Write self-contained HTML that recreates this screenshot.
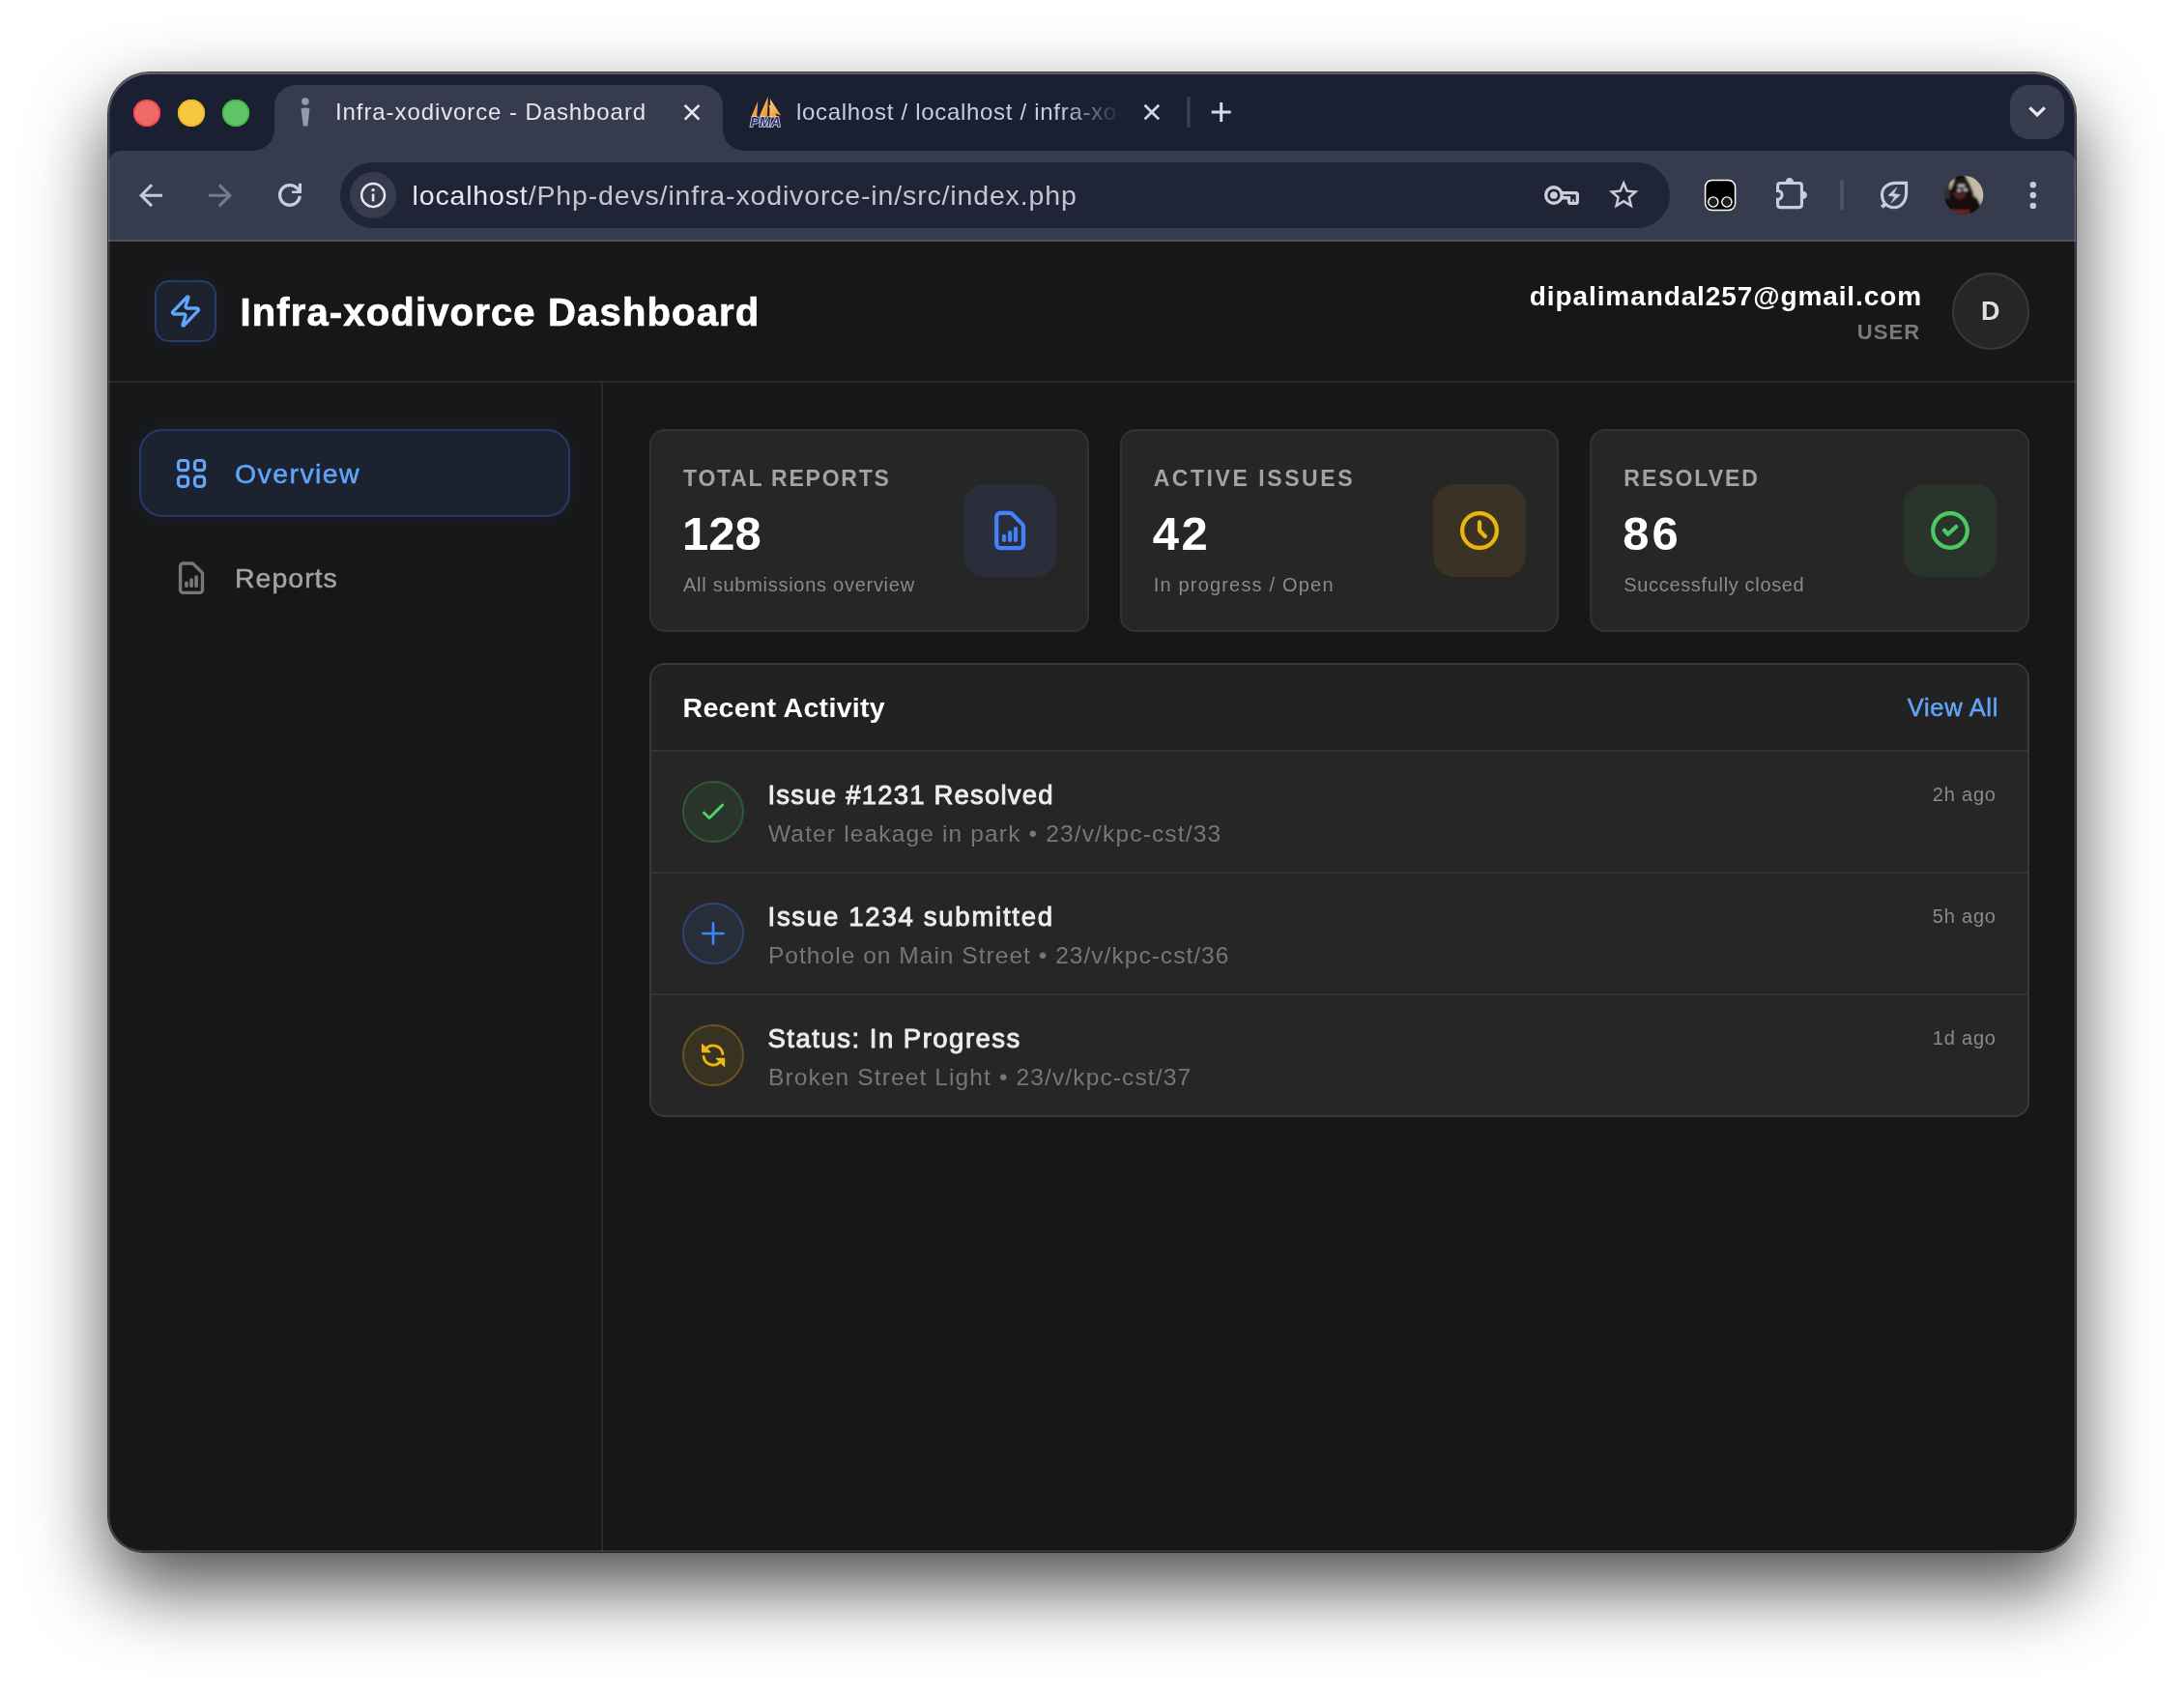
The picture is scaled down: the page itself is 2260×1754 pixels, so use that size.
<!DOCTYPE html>
<html lang="en">
<head>
<meta charset="utf-8">
<title>Infra-xodivorce - Dashboard</title>
<style>
*{box-sizing:border-box;margin:0;padding:0}
html,body{width:2260px;height:1754px;background:#fff;overflow:hidden}
body{font-family:"Liberation Sans",sans-serif;position:relative}
.abs{position:absolute}
#shadow{position:absolute;left:112px;top:75px;width:2036px;height:1531px;border-radius:43px 43px 37px 37px;
 box-shadow:0 36px 80px 0 rgba(0,0,0,.7),0 0 0 1px rgba(0,0,0,.72)}
#win{position:absolute;left:112px;top:75px;width:2036px;height:1531px;border-radius:43px 43px 37px 37px;overflow:hidden;background:#171717;will-change:transform}
#rim{position:absolute;left:112px;top:75px;width:2036px;height:1531px;border-radius:43px 43px 37px 37px;pointer-events:none;
 box-shadow:inset 0 0 0 1.5px rgba(255,255,255,.19),inset 0 2px 0 0 rgba(255,255,255,.16)}
/* chrome */
#tabstrip{position:absolute;left:0;top:0;width:2036px;height:110px;background:#1a2031}
#toolbar{position:absolute;left:0;top:81px;width:2036px;height:92px;background:#363c4d;border-radius:14px 14px 0 0}
#tbline{position:absolute;left:0;top:173px;width:2036px;height:2px;background:#4b4f5a}
.tl{position:absolute;top:28px;width:28px;height:28px;border-radius:50%}
#tab1{position:absolute;left:172px;top:13px;width:464px;height:70px;background:#363c4d;border-radius:22px 22px 0 0}
.tabfoot{position:absolute;top:59px;width:22px;height:22px;background:#363c4d}
.tabfoot i{position:absolute;left:0;top:0;width:22px;height:22px;background:#1a2031}
.ttxt{position:absolute;white-space:nowrap;font-size:24px;line-height:30px;letter-spacing:.91px}
#url{position:absolute;left:240px;top:93px;width:1376px;height:68px;border-radius:34px;background:#1f2536}
#urltxt{position:absolute;left:314.5px;top:109px;font-size:28.5px;line-height:36px;color:#e6e8ee;white-space:nowrap;letter-spacing:.85px}
#urltxt span{color:#c3c6cf}
svg{position:absolute;overflow:visible}
/* page */
#page{position:absolute;left:0;top:175px;width:2036px;height:1356px;background:#171717;color:#fff}
#hdr{position:absolute;left:0;top:0;width:2036px;height:146px;border-bottom:2px solid #292929}
#side{position:absolute;left:0;top:146px;width:512px;height:1210px;border-right:2px solid #292929}
.card{position:absolute;background:#262626;border:2px solid #333;border-radius:16px}
.lbl{position:absolute;left:33px;top:36px;font-size:23px;font-weight:700;letter-spacing:2.05px;color:#a3a3a3;white-space:nowrap;line-height:26px}
.num{position:absolute;left:32px;top:78px;font-size:49px;font-weight:700;color:#fff;line-height:56px;white-space:nowrap}
.sub{position:absolute;left:33px;top:146px;font-size:20px;color:#8a8a8a;white-space:nowrap;line-height:26px;letter-spacing:.2px}
.ibox{position:absolute;right:32px;top:55px;width:96px;height:96px;border-radius:22px}
.row{position:absolute;left:0;width:1424px;height:126px;border-top:2px solid #343434}
.row .t{position:absolute;left:120.5px;top:27.5px;font-size:27.5px;font-weight:400;-webkit-text-stroke:.9px #ededed;color:#ededed;white-space:nowrap;line-height:34px;letter-spacing:.3px}
.row .s{position:absolute;left:121px;top:69.7px;font-size:24.5px;color:#777;white-space:nowrap;line-height:30px;letter-spacing:1.2px}
.row .ago{position:absolute;right:32.3px;top:30.5px;font-size:20px;color:#8a8a8a;white-space:nowrap;line-height:26px;letter-spacing:.78px}
.circ{position:absolute;left:32px;top:30px;width:64px;height:64px;border-radius:50%;border:2px solid}

.tx{position:absolute;white-space:nowrap}
#logo{position:absolute;left:48px;top:40px;width:64px;height:64px;border-radius:15px;background:#1d222e;border:2px solid #273c68;box-shadow:0 0 24px rgba(59,130,246,.10)}
#title{left:136.4px;top:48.2px;font-size:40px;font-weight:700;line-height:50px;letter-spacing:1.16px;color:#fff;-webkit-text-stroke:.7px #fff}
#email{right:159px;top:39px;font-size:28px;font-weight:700;line-height:36px;letter-spacing:.9px;color:#fff}
#role{right:160.7px;top:79.7px;font-size:22px;font-weight:700;line-height:28px;letter-spacing:1.1px;color:#7a7a7a}
#avatar{position:absolute;left:1908px;top:32px;width:80px;height:80px;border-radius:50%;background:#262626;border:2px solid #3a3a3a}
#avd{left:1938px;top:55px;font-size:27px;font-weight:700;line-height:34px;color:#e0e0e0}
#navact{position:absolute;left:32px;top:48px;width:446px;height:91px;border-radius:24px;background:#1d2231;border:2px solid #263a68;box-shadow:0 0 30px rgba(59,130,246,.10)}
#nav1{left:131px;top:75.5px;font-size:28.5px;line-height:36px;color:#60a5fa;letter-spacing:1.41px;-webkit-text-stroke:.5px #60a5fa}
#nav2{left:131px;top:184px;font-size:28.5px;line-height:36px;color:#a3a3a3;letter-spacing:1px;-webkit-text-stroke:.5px #a3a3a3}
#main{position:absolute;left:560px;top:194px;width:1428px;height:1100px}
.card{top:0;width:454.67px;height:210px}
#act{position:absolute;left:0;top:242px;width:1428px;height:470px;border:2px solid #3a3a3a;border-radius:16px;background:#262626;overflow:hidden}
#acthead{position:absolute;left:0;top:0;width:1424px;height:88px;background:#222}
#ra{left:32.5px;top:26px;font-size:28.5px;font-weight:700;line-height:36px;color:#fff;letter-spacing:.31px}
#va{right:30px;top:28.4px;font-size:25.5px;line-height:32px;color:#60a5fa;letter-spacing:.67px;-webkit-text-stroke:.5px #60a5fa}

#n2{letter-spacing:2.7px}#n3{letter-spacing:3px}
#l1{letter-spacing:1.76px}#l2{letter-spacing:2.56px}#l3{letter-spacing:1.96px}#u1{letter-spacing:1.15px}#u2{letter-spacing:1.03px}#u3{letter-spacing:1.12px}
#s1{letter-spacing:.73px}#s2{letter-spacing:1.19px}#s3{letter-spacing:.66px}
#t1{letter-spacing:1.21px}#t2{letter-spacing:1.74px}#t3{letter-spacing:1.5px}
</style>
</head>
<body>
<div id="shadow"></div>
<div id="win">
  <div id="tabstrip"></div>
  <div id="toolbar"></div>
  <div id="tbline"></div>
  <div class="tl" style="left:26px;background:#ee6a69;box-shadow:inset 0 0 0 1.5px #f4403c"></div>
  <div class="tl" style="left:72px;background:#f5c840;box-shadow:inset 0 0 0 1.5px #f0b526"></div>
  <div class="tl" style="left:118px;background:#62c466;box-shadow:inset 0 0 0 1.5px #3fb545"></div>

  <div id="tab1"></div>
  <div class="tabfoot" style="left:150px"><i style="border-radius:0 0 22px 0"></i></div>
  <div class="tabfoot" style="left:636px"><i style="border-radius:0 0 0 22px"></i></div>

  <div class="ttxt" id="tab1t" style="left:235px;top:26px;color:#e4e6ec">Infra-xodivorce - Dashboard</div>
  <div class="ttxt" id="tab2t" style="left:712px;top:26px;color:#c6cce4;width:336px;letter-spacing:.7px;overflow:hidden;-webkit-mask-image:linear-gradient(90deg,#000 82%,transparent 100%);mask-image:linear-gradient(90deg,#000 82%,transparent 100%)">localhost / localhost / infra-xodivorce</div>

  <div id="url"></div>
  <div id="urltxt">localhost<span>/Php-devs/infra-xodivorce-in/src/index.php</span></div>


  <svg id="chromeicons" style="left:0;top:0" width="2036" height="175" viewBox="112 75 2036 175">
    <defs>
      <linearGradient id="sail" x1="0" y1="0" x2="1" y2="1"><stop offset="0" stop-color="#fbd489"/><stop offset="1" stop-color="#f08a1c"/></linearGradient>
      <clipPath id="avc"><circle cx="2032.2" cy="201.9" r="20.1"/></clipPath><filter id="avb" x="-10%" y="-10%" width="120%" height="120%"><feGaussianBlur stdDeviation=".8"/></filter>
    </defs>
    <!-- tab 1 favicon -->
    <g fill="#939aa9"><circle cx="315.9" cy="105" r="3.8"/><path d="M311.5 112.4Q316 110.4 320.4 112.4L318.4 130.4H313.8Z"/></g>
    <!-- tab close buttons -->
    <path d="M708.7 108.9l14.7 14.7M723.4 108.9l-14.7 14.7" stroke="#e4e6ec" stroke-width="2.7" fill="none"/>
    <path d="M1184.5 108.7l14.7 14.7M1199.2 108.7l-14.7 14.7" stroke="#d3d8e8" stroke-width="2.7" fill="none"/>
    <!-- PMA favicon -->
    <g>
      <path d="M784.2 105L783.2 121H777.4Z" fill="url(#sail)"/>
      <path d="M794.8 99.8L794 121.6H785.4Z" fill="url(#sail)"/>
      <path d="M796.9 102.2L808.2 119.6L802.5 117.5L804 121.8L796.2 122L796.4 112L795.4 108.5L797.2 109.5Z" fill="url(#sail)"/>
      <text x="776.2" y="131.2" font-family="Liberation Sans, sans-serif" font-size="14.2" font-weight="700" font-style="italic" fill="#2e2f70" stroke="#d9dbe6" stroke-width="1.6" paint-order="stroke" letter-spacing=".1">PMA</text>
    </g>
    <!-- separator + new tab -->
    <rect x="1228.2" y="100" width="3.4" height="32" rx="1.7" fill="#3a4157"/>
    <path d="M1253.7 116h20M1263.7 106v20" stroke="#d6dbec" stroke-width="3" fill="none"/>
    <!-- tab search -->
    <rect x="2080" y="88" width="56" height="56" rx="19" fill="#363c4d"/>
    <path d="M2100.4 111.3l7.7 7.7 7.7-7.7" stroke="#e8eaf0" stroke-width="3.3" fill="none"/>
    <!-- nav -->
    <path transform="translate(138 184.2) scale(1.5)" d="M20 11H7.83l5.59-5.59L12 4l-8 8 8 8 1.41-1.41L7.83 13H20v-2z" fill="#c3c9e0"/>
    <path transform="translate(246 184.2) scale(-1.5 1.5)" d="M20 11H7.83l5.59-5.59L12 4l-8 8 8 8 1.41-1.41L7.83 13H20v-2z" fill="#747b8d"/>
    <path d="M308 195.56A10.3 10.3 0 1 0 310.16 202.8" fill="none" stroke="#c8cde0" stroke-width="3.4"/><path d="M312 189.8V200H302V197.4H307L308.9 193.5V189.8Z" fill="#c8cde0"/>
    <!-- site info -->
    <circle cx="386" cy="202" r="24" fill="#363c4d"/>
    <circle cx="386.1" cy="202" r="11.9" fill="none" stroke="#e6e8ee" stroke-width="2.5"/>
    <circle cx="386.1" cy="196.6" r="1.7" fill="#e6e8ee"/><path d="M386.1 200.6v7.8" stroke="#e6e8ee" stroke-width="2.6"/>
    <!-- key -->
    <g stroke="#cdcfd7" stroke-width="3.3" fill="none"><circle cx="1607.9" cy="202" r="8.25"/><path d="M1615.8 199.6H1630.3a2 2 0 0 1 2 2V208.4a2 2 0 0 1-2 2H1625.5a2 2 0 0 1-2-2V204.75H1615.8"/></g>
    <circle cx="1607.9" cy="202" r="3.85" fill="#cdcfd7"/><path d="M1628 210v-4" stroke="#cdcfd7" stroke-width="1.5"/>
    <!-- star -->
    <path transform="translate(1661.84 183.3) scale(1.53)" d="M22 9.24l-7.19-.62L12 2 9.19 8.63 2 9.24l5.46 4.73L5.82 21 12 17.27 18.18 21l-1.63-7.03L22 9.24zM12 15.4l-3.76 2.27 1-4.28-3.32-2.88 4.38-.38L12 6.1l1.71 4.04 4.38.38-3.32 2.88 1 4.28L12 15.4z" fill="#c9ccd5"/>
    <!-- extension -->
    <rect x="1764.6" y="186.5" width="31" height="31" rx="7" fill="#000" stroke="#fff" stroke-width="1.5"/>
    <circle cx="1772.8" cy="209" r="5.1" fill="#1e1e1e" stroke="#fff" stroke-width="1.4"/><circle cx="1786.9" cy="209" r="5.1" fill="#1e1e1e" stroke="#fff" stroke-width="1.4"/>
    <!-- puzzle -->
    <path d="M1839.55 197.35V192.05a2.5 2.5 0 0 1 2.5-2.5H1861.95a2.5 2.5 0 0 1 2.5 2.5V212.1a2.5 2.5 0 0 1-2.5 2.5H1842.05a2.5 2.5 0 0 1-2.5-2.5V206.35a4.5 4.5 0 0 0 0-9Z" fill="none" stroke="#c6cce2" stroke-width="3.1"/>
    <path d="M1847.65 188.6a4.2 4.6 0 0 1 8.4 0ZM1865.6 197.65a4.4 4.2 0 0 1 0 8.4Z" fill="#c6cce2"/>
    <rect x="1904.2" y="186" width="3.7" height="31.5" rx="1.85" fill="#4d5368"/>
    <!-- leaf -->
    <path d="M1972.6 189.4H1962C1953 189.4 1947.5 194.5 1947.5 201.6C1947.5 205 1948.5 208 1950.5 210.5C1953 213.2 1956 214.7 1960 214.7C1967.5 214.7 1972.6 208 1972.6 199Z" fill="none" stroke="#c6cce2" stroke-width="3.1" stroke-linejoin="miter"/>
    <path d="M1950.9 210.8L1947.4 214.3" stroke="#c6cce2" stroke-width="3.8" fill="none"/>
    <path d="M1962.7 193.9L1954 202.3L1960.7 203.4L1957 210.2L1966.3 201.6L1959.5 200.6Z" fill="#c6cce2" stroke="#c6cce2" stroke-width=".7" stroke-linejoin="round"/>
    <!-- avatar -->
    <g clip-path="url(#avc)"><g filter="url(#avb)">
      <rect x="2008" y="178" width="48" height="48" fill="#12110f"/>
      <path d="M2032.7 180L2036.9 187.7L2040 194.1L2042.3 200.5V203L2044.8 203.7L2048 208.5L2049.6 212.5L2056 214V178Z" fill="#cdc1ae"/>
      <path d="M2036 183v3M2039.5 183v8M2043 183v20M2046.5 185v21M2049.6 188v22" stroke="#a89a89" stroke-width="1" opacity=".7"/>
      <path d="M2008 186H2017.7V206H2008Z" fill="#302f36"/>
      <path d="M2017.7 188.4L2022.8 183.8L2021.6 188.4L2018.7 195.8H2017.2Z" fill="#c9bda9"/>
      <path d="M2022 190C2024 184.5 2031 183 2034 185L2039 194L2040.5 200L2024 196Z" fill="#1d1c19"/>
      <rect x="2026" y="190.8" width="7.4" height="3" rx="1" fill="#b3b3b3"/>
      <path d="M2020.9 199.2L2034.3 197.9L2033.7 203.7L2027.9 206.6L2022.8 203.7Z" fill="#4d211e"/>
      <ellipse cx="2027.3" cy="197" rx="2.3" ry="1.1" fill="#dcdcdc"/><ellipse cx="2033.7" cy="196.4" rx="2.3" ry="1.2" fill="#dcdcdc"/>
      <path d="M2019.5 219.6H2039" stroke="#7e2d23" stroke-width="5" stroke-dasharray="2.6 1.2"/>
    </g></g>
    <!-- menu -->
    <g fill="#c4cae4"><circle cx="2103.8" cy="191.2" r="3.2"/><circle cx="2103.8" cy="202" r="3.2"/><circle cx="2103.8" cy="212.9" r="3.2"/></g>
  </svg>
  <div id="page">
    <div id="hdr">
      <div id="logo"></div>
      <svg style="left:62px;top:54px" width="36" height="36" viewBox="0 0 24 24" fill="none" stroke="#60a5fa" stroke-width="2.2" stroke-linecap="round" stroke-linejoin="round"><path d="M4 14a1 1 0 0 1-.78-1.63l9.9-10.2a.5.5 0 0 1 .86.46l-1.92 6.02A1 1 0 0 0 13 10h7a1 1 0 0 1 .78 1.63l-9.9 10.2a.5.5 0 0 1-.86-.46l1.92-6.02A1 1 0 0 0 11 14z"/></svg>
      <div id="title" class="tx">Infra-xodivorce Dashboard</div>
      <div id="email" class="tx">dipalimandal257@gmail.com</div>
      <div id="role" class="tx">USER</div>
      <div id="avatar"></div>
      <div id="avd" class="tx">D</div>
    </div>
    <div id="side">
      <div id="navact"></div>
      <svg style="left:70px;top:78px" width="32" height="32" viewBox="0 0 32 32" fill="none" stroke="#60a5fa" stroke-width="3.2"><rect x="2.5" y="2.5" width="10.1" height="10.2" rx="3"/><rect x="19.5" y="2.5" width="10.1" height="10.2" rx="3"/><rect x="2.5" y="19.1" width="10.1" height="10.2" rx="3"/><rect x="19.5" y="19.1" width="10.1" height="10.2" rx="3"/></svg>
      <div id="nav1" class="tx">Overview</div>
      <svg style="left:72px;top:184px" width="28" height="36" viewBox="0 0 28 36" fill="none" stroke="#787878" stroke-width="3.4" stroke-linecap="round" stroke-linejoin="round"><path d="M5.6 3H14.2Q15.4 3 16.3 3.9L24.6 11.9Q25.5 12.8 25.5 14V30.4a3 3 0 0 1-3 3H5.6a3 3 0 0 1-3-3V6a3 3 0 0 1 3-3Z"/><path d="M8.95 23.4V26.2M14.05 20V26.2M19.1 17V26.2" stroke-width="3.7"/></svg>
      <div id="nav2" class="tx">Reports</div>
    </div>
    <div id="main">
      <div class="card" style="left:0"><div class="lbl tx" id="l1">TOTAL REPORTS</div><div class="num tx" id="n1">128</div><div class="sub tx" id="s1">All submissions overview</div><div class="ibox" style="background:#292e3a">
        <svg style="left:32px;top:27px" width="34" height="42" viewBox="0 0 34 42" fill="none" stroke="#4182fa" stroke-width="4.25" stroke-linecap="round" stroke-linejoin="round"><path d="M6.2 2.9H16Q17.5 2.9 18.6 4L28.9 14.4Q30 15.5 30 17V35.1a4 4 0 0 1-4 4H6.2a4 4 0 0 1-4-4V6.9a4 4 0 0 1 4-4Z"/><path d="M10 26.8V31M16.1 23V31M22 19V31" stroke-width="4.2"/></svg></div></div>
      <div class="card" style="left:486.67px"><div class="lbl tx" id="l2">ACTIVE ISSUES</div><div class="num tx" id="n2">42</div><div class="sub tx" id="s2">In progress / Open</div><div class="ibox" style="background:#3a3324">
        <svg style="left:28px;top:28px" width="40" height="40" viewBox="0 0 40 40" fill="none" stroke="#eab50f" stroke-width="4.25" stroke-linecap="round" stroke-linejoin="round"><circle cx="20" cy="20" r="17.9"/><path d="M20 11.4V20l5.8 5.9"/></svg></div></div>
      <div class="card" style="left:973.33px"><div class="lbl tx" id="l3">RESOLVED</div><div class="num tx" id="n3">86</div><div class="sub tx" id="s3">Successfully closed</div><div class="ibox" style="background:#29352b">
        <svg style="left:28px;top:28px" width="40" height="40" viewBox="0 0 40 40" fill="none" stroke="#4cc964" stroke-width="4.25" stroke-linecap="round" stroke-linejoin="round"><circle cx="20" cy="20" r="17.8"/><path d="M14 19.7l3.75 4.05 8.45-7.75"/></svg></div></div>

      <div id="act">
        <div id="acthead"></div>
        <div id="ra" class="tx">Recent Activity</div>
        <div id="va" class="tx">View All</div>
        <div class="row" style="top:88px"><div class="circ" style="background:#2a362c;border-color:#2f5a38"></div>
          <div class="t tx" id="t1">Issue #1231 Resolved</div><div class="s tx" id="u1">Water leakage in park &#8226; 23/v/kpc-cst/33</div><div class="ago tx" id="a1">2h ago</div></div>
        <div class="row" style="top:214px"><div class="circ" style="background:#282d3a;border-color:#304577"></div>
          <div class="t tx" id="t2">Issue 1234 submitted</div><div class="s tx" id="u2">Pothole on Main Street &#8226; 23/v/kpc-cst/36</div><div class="ago tx" id="a2">5h ago</div></div>
        <div class="row" style="top:340px"><div class="circ" style="background:#383223;border-color:#66541c"></div>
          <div class="t tx" id="t3">Status: In Progress</div><div class="s tx" id="u3">Broken Street Light &#8226; 23/v/kpc-cst/37</div><div class="ago tx" id="a3">1d ago</div></div>
        <svg style="left:0;top:0" width="1424" height="466" viewBox="674 688 1424 466" fill="none" stroke-linecap="round" stroke-linejoin="round">
          <path d="M728.4 841.1l5.7 5.4 13.5-13.5" stroke="#4fd667" stroke-width="2.8"/>
          <path d="M727.4 966h21.2M738 955.4v21.2" stroke="#4083fb" stroke-width="2.7"/>
          <g stroke="#efb810" stroke-width="2.8"><path d="M730.3 1085.6A10 10 0 0 1 747.9 1090.6"/><path d="M728.1 1093.4A10 10 0 0 0 745.7 1098.4"/></g>
          <path d="M726.6 1080.6V1088.6H735ZM749.6 1103.4V1095.4H741.2Z" fill="#efb810" stroke="#efb810" stroke-width="1.2"/>
        </svg>
      </div>
    </div>
  </div>
</div>
<div id="rim"></div>
</body>
</html>
